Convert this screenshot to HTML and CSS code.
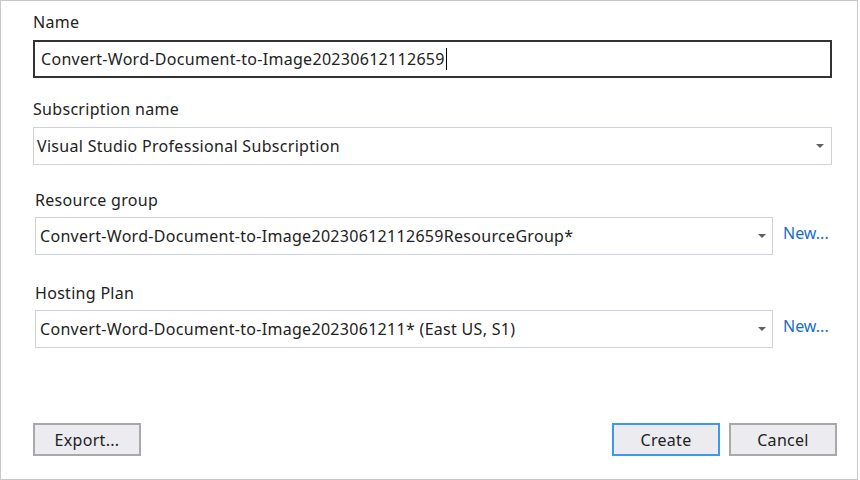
FILE: index.html
```html
<!DOCTYPE html>
<html>
<head>
<meta charset="utf-8">
<link rel="stylesheet" href="styles.css">
</head>
<body>
<div class="dialog">
  <div class="field name-field">
    <div class="label">Name</div>
    <div class="textbox"><span class="value">Convert-Word-Document-to-Image20230612112659</span><span class="caret"></span></div>
  </div>
  <div class="field sub-field">
    <div class="label">Subscription name</div>
    <div class="select wide">
      <span class="value">Visual Studio Professional Subscription</span>
      <span class="arrow"></span>
    </div>
  </div>
  <div class="field rg-field">
    <div class="label">Resource group</div>
    <div class="row">
      <div class="select narrow">
        <span class="value">Convert-Word-Document-to-Image20230612112659ResourceGroup*</span>
        <span class="arrow"></span>
      </div>
      <a class="link">New...</a>
    </div>
  </div>
  <div class="field hp-field">
    <div class="label">Hosting Plan</div>
    <div class="row">
      <div class="select narrow">
        <span class="value">Convert-Word-Document-to-Image2023061211* (East US, S1)</span>
        <span class="arrow"></span>
      </div>
      <a class="link">New...</a>
    </div>
  </div>
  <div class="spacer"></div>
  <div class="buttons">
    <button class="btn">Export...</button>
    <div class="right">
      <button class="btn primary">Create</button>
      <button class="btn">Cancel</button>
    </div>
  </div>
</div>
</body>
</html>
```

FILE: styles.css
```css
html, body {
  margin: 0;
  padding: 0;
  background: #ffffff;
}
body {
  font-family: "Noto Sans", "Open Sans", sans-serif;
  font-size: 16px;
  letter-spacing: 0.3px;
  color: #222222;
}
.dialog {
  box-sizing: border-box;
  width: 858px;
  height: 480px;
  border: 1px solid #c8c8c8;
  padding: 11px 25px 0 32px;
  display: flex;
  flex-direction: column;
}
.label {
  line-height: 20px;
  height: 20px;
}
.textbox {
  box-sizing: border-box;
  margin-top: 8px;
  height: 38px;
  border: 2px solid #333333;
  padding-left: 6px;
  display: flex;
  align-items: center;
}
.caret {
  display: inline-block;
  width: 1px;
  height: 22px;
  background: #000;
  margin-left: 1px;
}
.select {
  box-sizing: border-box;
  height: 38px;
  border: 1px solid #ccd0df;
  display: flex;
  align-items: center;
  justify-content: space-between;
  padding: 0 7px 0 3px;
}
.wide {
  margin-top: 8px;
}
.arrow {
  width: 0;
  height: 0;
  border-left: 4px solid transparent;
  border-right: 4px solid transparent;
  border-top: 4px solid #606060;
}
.sub-field {
  margin-top: 21px;
}
.rg-field {
  margin-top: 25px;
  padding-left: 2px;
}
.hp-field {
  margin-top: 28px;
  padding-left: 2px;
}
.row {
  margin-top: 7px;
  display: flex;
  align-items: center;
  gap: 10px;
}
.narrow {
  width: 738px;
  padding-left: 4px;
  padding-right: 6px;
}
.link {
  color: #1a6fc4;
  cursor: pointer;
  margin-top: -6px;
  letter-spacing: 0;
}
.spacer {
  flex: 1;
}
.buttons {
  display: flex;
  justify-content: space-between;
  margin-right: -5px;
  margin-bottom: 23px;
}
.right {
  display: flex;
  gap: 9px;
}
.btn {
  box-sizing: border-box;
  width: 108px;
  height: 33px;
  background: #ebebf0;
  border: 2px solid #a9a9a9;
  font-family: inherit;
  font-size: 16px;
  letter-spacing: 0.3px;
  color: #222222;
  padding: 0;
}
.primary {
  border-color: #3b99f0;
}
```
